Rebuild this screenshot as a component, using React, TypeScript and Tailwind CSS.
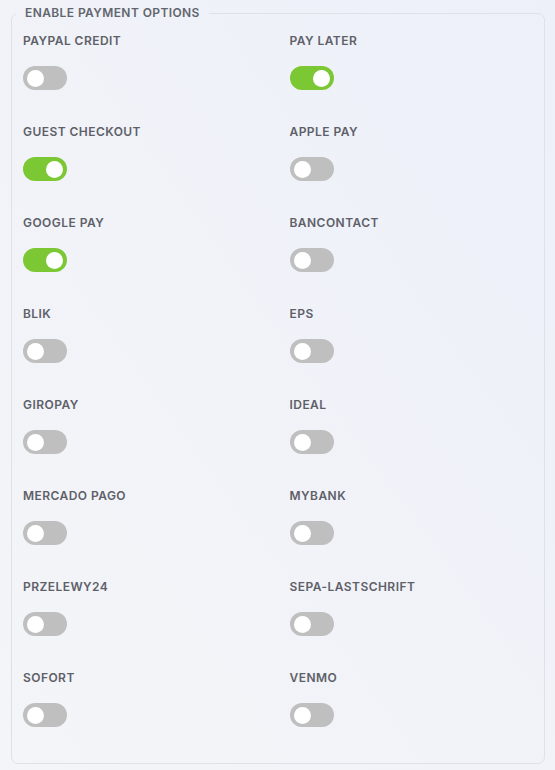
import React, { useState } from "react";

type Option = { label: string; on: boolean };

const OPTIONS: Option[] = [
  { label: "PAYPAL CREDIT", on: false },
  { label: "PAY LATER", on: true },
  { label: "GUEST CHECKOUT", on: true },
  { label: "APPLE PAY", on: false },
  { label: "GOOGLE PAY", on: true },
  { label: "BANCONTACT", on: false },
  { label: "BLIK", on: false },
  { label: "EPS", on: false },
  { label: "GIROPAY", on: false },
  { label: "IDEAL", on: false },
  { label: "MERCADO PAGO", on: false },
  { label: "MYBANK", on: false },
  { label: "PRZELEWY24", on: false },
  { label: "SEPA-LASTSCHRIFT", on: false },
  { label: "SOFORT", on: false },
  { label: "VENMO", on: false },
];

function Toggle({ on, onChange }: { on: boolean; onChange: () => void }) {
  return (
    <button
      type="button"
      role="switch"
      aria-checked={on}
      onClick={onChange}
      className={
        "relative flex h-[24px] w-[44px] items-center rounded-full px-[4px] " +
        (on ? "justify-end bg-[#7cc734]" : "justify-start bg-[#bfbfbf]")
      }
    >
      <span className="block h-[17px] w-[17px] rounded-full bg-white" />
    </button>
  );
}

export default function App() {
  const [state, setState] = useState(OPTIONS.map((o) => o.on));

  return (
    <div
      className="min-h-screen w-full bg-gradient-to-bl from-[#edf0f9] to-[#f4f5f8] pl-[11px] pr-[10px] pt-[5px]"
      style={{ fontFamily: "Inter, 'Liberation Sans', Arial, sans-serif" }}
    >
      <fieldset className="rounded-[7px] border border-[#dfe1e6] px-[11px] pb-[2px] pt-[12px]">
        <legend className="ml-[-7px] px-[9px] text-[12px] font-semibold leading-[16px] tracking-[0.4px] text-[#62656d]">
          ENABLE PAYMENT OPTIONS
        </legend>
        <div className="grid grid-cols-2 gap-x-[23px]">
          {OPTIONS.map((o, i) => (
            <div key={o.label} className="flex flex-col items-start pb-[34px]">
              <div className="text-[12px] font-semibold leading-[16px] tracking-[0.45px] text-[#5e6068]">
                {o.label}
              </div>
              <div className="mt-[17px]">
                <Toggle
                  on={state[i]}
                  onChange={() =>
                    setState((s) => s.map((v, j) => (j === i ? !v : v)))
                  }
                />
              </div>
            </div>
          ))}
        </div>
      </fieldset>
    </div>
  );
}
